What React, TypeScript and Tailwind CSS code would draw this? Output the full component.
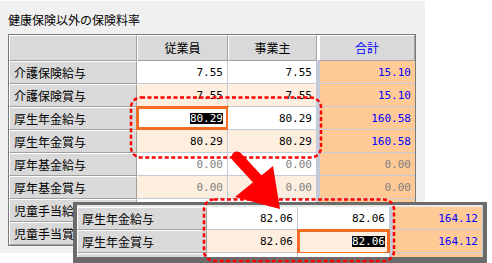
import type { ReactNode } from 'react';

type Row = {
  label: string;
  emp: string;
  own: string;
  total: string;
  bonus?: boolean;
  zero?: boolean;
  selected?: boolean;
};

// the last two rows sit under the callout, so their values stay blank
const rows: Row[] = [
  { label: '介護保険給与', emp: '7.55', own: '7.55', total: '15.10' },
  { label: '介護保険賞与', emp: '7.55', own: '7.55', total: '15.10', bonus: true },
  { label: '厚生年金給与', emp: '80.29', own: '80.29', total: '160.58', selected: true },
  { label: '厚生年金賞与', emp: '80.29', own: '80.29', total: '160.58', bonus: true },
  { label: '厚年基金給与', emp: '0.00', own: '0.00', total: '0.00', zero: true },
  { label: '厚年基金賞与', emp: '0.00', own: '0.00', total: '0.00', bonus: true, zero: true },
  { label: '児童手当給与', emp: '', own: '', total: '', zero: true },
  { label: '児童手当賞与', emp: '', own: '', total: '', bonus: true, zero: true },
];

const jp = "font-['MS_UI_Gothic','Noto_Sans_CJK_JP',sans-serif]";
const mono = "font-['DejaVu_Sans_Mono','Liberation_Mono',monospace]";

function LabelCell({ children }: { children: ReactNode }) {
  return (
    <div
      className={`flex h-[23px] items-center border-t border-l border-r border-b border-t-white border-l-white border-r-[#a0a0a0] border-b-[#a0a0a0] bg-[#d9d9d9] pl-[4px] text-[12px] leading-none text-black ${jp}`}
    >
      {children}
    </div>
  );
}

function HeadCell({ children, total }: { children?: ReactNode; total?: boolean }) {
  return (
    <div
      className={`flex h-[26px] items-center justify-center border-t border-l border-r border-b border-t-white border-l-white border-r-[#a0a0a0] border-b-[#a0a0a0] bg-[#d9d9d9] text-[12px] leading-none ${jp} ${
        total ? 'border-l-[3px] border-l-[#8a8a8a] text-[#0000ff]' : 'text-black'
      }`}
    >
      {children}
    </div>
  );
}

function ValueCell({
  value,
  bonus,
  zero,
  selected,
  framed,
}: {
  value: string;
  bonus?: boolean;
  zero?: boolean;
  selected?: boolean;
  framed?: boolean;
}) {
  return (
    <div
      className={`relative flex h-[23px] items-center justify-end border-r border-b border-[#c3cbd9] pr-[4px] text-[11px] leading-none ${mono} ${
        bonus ? 'bg-[#fdeee0]' : 'bg-white'
      } ${zero ? 'text-[#808080]' : 'text-black'}`}
    >
      {value && <span className={selected ? 'bg-black text-white' : ''}>{value}</span>}
      {framed && (
        <div className="absolute -top-px -left-px -right-[2px] -bottom-px border-[3px] border-[#f26d24]" />
      )}
    </div>
  );
}

function TotalCell({ value, zero }: { value: string; zero?: boolean }) {
  return (
    <div
      className={`flex h-[23px] items-center justify-end border-l-[3px] border-b border-l-[#c3cbd9] border-b-[#c3cbd9] bg-[#ffca96] pr-[4px] text-[11px] leading-none ${mono} ${
        zero ? 'text-[#808080]' : 'text-[#0000ff]'
      }`}
    >
      {value}
    </div>
  );
}

function RowCells({ row }: { row: Row }) {
  return (
    <>
      <LabelCell>{row.label}</LabelCell>
      <ValueCell
        value={row.emp}
        bonus={row.bonus}
        zero={row.zero}
        selected={row.selected}
        framed={row.selected}
      />
      <ValueCell value={row.own} bonus={row.bonus} zero={row.zero} />
      <TotalCell value={row.total} zero={row.zero} />
    </>
  );
}

function RateTable() {
  return (
    <div className="w-[408px] border border-[#7a7a7a] bg-white">
      <div className="grid grid-cols-[128px_91px_89px_98px]">
        <HeadCell />
        <HeadCell>従業員</HeadCell>
        <HeadCell>事業主</HeadCell>
        <HeadCell total>合計</HeadCell>
        {rows.map((r) => (
          <RowCells key={r.label} row={r} />
        ))}
      </div>
    </div>
  );
}

function Callout() {
  return (
    <div className="absolute left-[73px] top-[202px] h-[61px] w-[414px] bg-[#6b6b6b] pt-[3px] pl-[4px] pr-[4px] pb-[6px]">
      <div className="h-[52px] overflow-hidden border-r border-[#c3cbd9] bg-[#e9e9e9] pt-[2px]">
        <div className="grid grid-cols-[130px_91px_92px_92px]">
          <LabelCell>厚生年金給与</LabelCell>
          <ValueCell value="82.06" />
          <ValueCell value="82.06" />
          <TotalCell value="164.12" />
          <LabelCell>厚生年金賞与</LabelCell>
          <ValueCell value="82.06" bonus />
          <div className="relative">
            <ValueCell value="82.06" bonus selected />
            <div className="absolute -top-[1px] -left-px right-0 -bottom-[2px] border-[3px] border-[#f26d24]" />
          </div>
          <TotalCell value="164.12" />
          <LabelCell>{''}</LabelCell>
          <ValueCell value="" />
          <ValueCell value="" />
          <TotalCell value="" />
        </div>
      </div>
    </div>
  );
}

function Marks() {
  return (
    <svg
      className="pointer-events-none absolute left-0 top-0"
      width={492}
      height={263}
      viewBox="0 0 492 263"
    >
      <rect
        x={131}
        y={97.5}
        width={190}
        height={60}
        rx={10}
        fill="none"
        stroke="#ff0000"
        strokeWidth={2.5}
        strokeDasharray="4 2.5"
      />
      <line x1={237} y1={157} x2={262} y2={184} stroke="#ff0000" strokeWidth={11} strokeLinecap="round" />
      <polygon points="280,209 273,166 235,197" fill="#ff0000" />
      <rect
        x={204}
        y={199.5}
        width={190}
        height={61.5}
        rx={10}
        fill="none"
        stroke="#ff0000"
        strokeWidth={2.5}
        strokeDasharray="4 2.5"
      />
    </svg>
  );
}

export default function App() {
  return (
    <div className="relative h-[263px] w-[492px] overflow-hidden bg-white">
      <div className="mt-px h-[252px] w-[425px] bg-[#f0f0f0] pl-[8px] pt-[11px]">
        <div className={`h-[16px] text-[12px] leading-[16px] text-black ${jp}`}>健康保険以外の保険料率</div>
        <div className="mt-[6px]">
          <RateTable />
        </div>
      </div>
      <Callout />
      <Marks />
    </div>
  );
}
